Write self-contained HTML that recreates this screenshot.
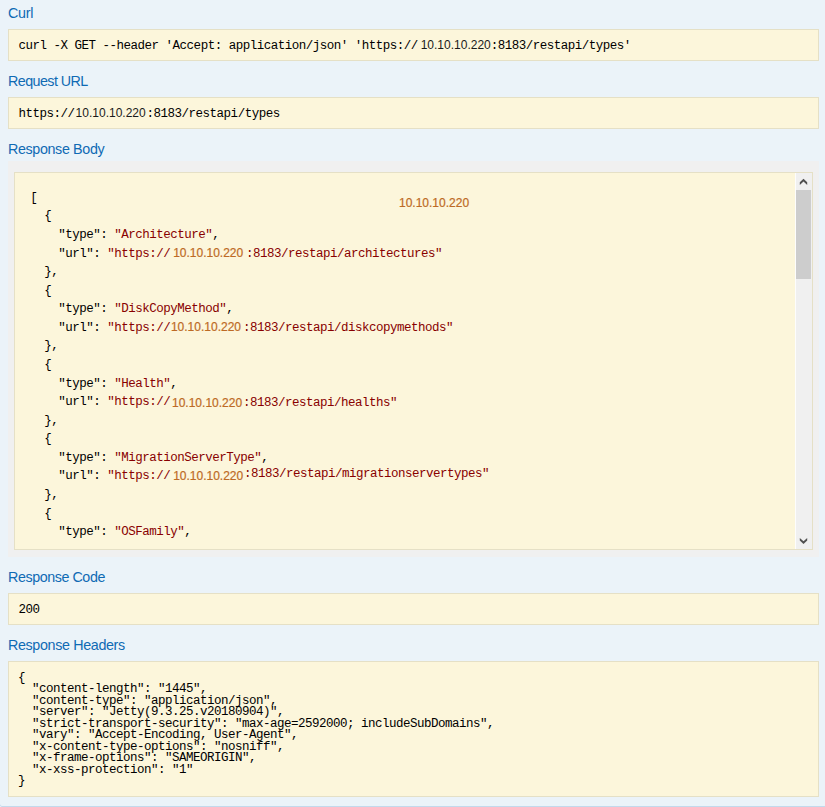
<!DOCTYPE html>
<html>
<head>
<meta charset="utf-8">
<title>Response</title>
<style>
html,body{margin:0;padding:0;}
body{width:825px;height:807px;overflow:hidden;background:#fff;position:relative;font-family:"Liberation Sans",sans-serif;}
.frame{position:absolute;left:-1px;top:-10px;width:840px;height:817px;box-sizing:border-box;background:#ebf3f9;border:1px solid #c3d9ec;border-radius:0 0 0 3px;}
h4{position:absolute;left:8px;margin:0;padding:0;font-family:"Liberation Sans",sans-serif;font-weight:normal;font-size:14.3px;letter-spacing:-0.3px;line-height:16px;height:16px;color:#0f6ab4;white-space:nowrap;}
.box{position:absolute;left:8px;width:811px;box-sizing:border-box;background:#fcf6db;border:1px solid #e5e0c6;}
pre,code{margin:0;font-family:"Liberation Mono",monospace;font-size:12.5px;letter-spacing:-0.5px;color:#000;white-space:pre;}
.one pre{position:absolute;left:9.6px;top:5.7px;line-height:20px;}
.hdr pre{position:absolute;left:9px;top:10.7px;line-height:11.5px;}
.ip{display:inline-block;line-height:12px;font-family:"Liberation Sans",sans-serif;font-size:12px;letter-spacing:0;text-align:left;white-space:nowrap;vertical-align:baseline;}
.outer{position:absolute;left:8px;top:161px;width:811px;height:396px;background:#f0f0f0;}
.inner{position:absolute;left:6px;top:11px;width:799px;height:378px;box-sizing:border-box;background:#fcf6db;border:1px solid #e5e0c6;overflow:hidden;}
.inner pre{position:absolute;left:15.3px;top:15.8px;line-height:18.571px;}
.s{color:#880000;}
.o{color:#bd6a24;-webkit-text-stroke:0.2px;}
.one .ip{position:relative;top:0.6px;color:#1a1a1a;}
.b{position:relative;top:0.3px;}
.sb{position:absolute;right:0;top:0;width:17px;height:376px;background:linear-gradient(to right,#fdfdfd 1px,#f0f0f0 1px);}
.sb .thumb{position:absolute;left:1px;top:17px;width:15px;height:89px;background:#cdcdcd;}
.sb svg{position:absolute;left:0;width:17px;height:17px;}
</style>
</head>
<body>
<div class="frame"></div>

<h4 style="top:5px">Curl</h4>
<div class="box one" style="top:29px;height:32px"><pre>curl -X GET --header 'Accept: application/json' 'https://<span class="ip" style="width:73px;text-indent:3px">10.10.10.220</span>:8183/restapi/types'</pre></div>

<h4 style="top:73px;letter-spacing:-0.56px">Request URL</h4>
<div class="box one" style="top:97px;height:32px"><pre>https://<span class="ip" style="width:72px;text-indent:1px">10.10.10.220</span>:8183/restapi/types</pre></div>

<h4 style="top:141px;letter-spacing:-0.36px">Response Body</h4>
<div class="outer"><div class="inner"><pre><code>[<span class="ip o" style="position:absolute;left:368.7px;top:8.1px">10.10.10.220</span>
  {
    "type": <span class="s">"Architecture"</span>,
    "url": <span class="s">"https://<span class="ip o b" style="width:75.7px;text-indent:2.8px">10.10.10.220</span>:8183/restapi/architectures"</span>
  },
  {
    "type": <span class="s">"DiskCopyMethod"</span>,
    "url": <span class="s">"https://<span class="ip o b" style="width:72.7px;text-indent:0.6px">10.10.10.220</span>:8183/restapi/diskcopymethods"</span>
  },
  {
    "type": <span class="s">"Health"</span>,
    "url": <span class="s">"https://<span class="ip o b" style="width:72.7px;text-indent:1.7px;top:2.2px">10.10.10.220</span><span style="position:relative;top:1px">:8183/restapi/healths"</span></span>
  },
  {
    "type": <span class="s">"MigrationServerType"</span>,
    "url": <span class="s">"https://<span class="ip o b" style="width:73.7px;text-indent:2.8px">10.10.10.220</span><span style="position:relative;top:-2px">:8183/restapi/migrationservertypes"</span></span>
  },
  {
    "type": <span class="s">"OSFamily"</span>,</code></pre>
<div class="sb"><svg style="top:0" viewBox="0 0 17 17"><polygon points="8.5,5.8 12.2,9.3 12.2,12 8.5,8.6 4.8,12 4.8,9.3" fill="#505050"/></svg><div class="thumb"></div><svg style="bottom:0" viewBox="0 0 17 17"><polygon points="4.8,5.9 4.8,8.6 8.5,12.1 12.2,8.6 12.2,5.9 8.5,9.3" fill="#505050"/></svg></div>
</div></div>

<h4 style="top:569px;letter-spacing:-0.43px">Response Code</h4>
<div class="box one" style="top:593px;height:32px"><pre>200</pre></div>

<h4 style="top:637px;letter-spacing:-0.35px">Response Headers</h4>
<div class="box hdr" style="top:661px;height:136px"><pre>{
  "content-length": "1445",
  "content-type": "application/json",
  "server": "Jetty(9.3.25.v20180904)",
  "strict-transport-security": "max-age=2592000; includeSubDomains",
  "vary": "Accept-Encoding, User-Agent",
  "x-content-type-options": "nosniff",
  "x-frame-options": "SAMEORIGIN",
  "x-xss-protection": "1"
}</pre></div>
</body>
</html>
